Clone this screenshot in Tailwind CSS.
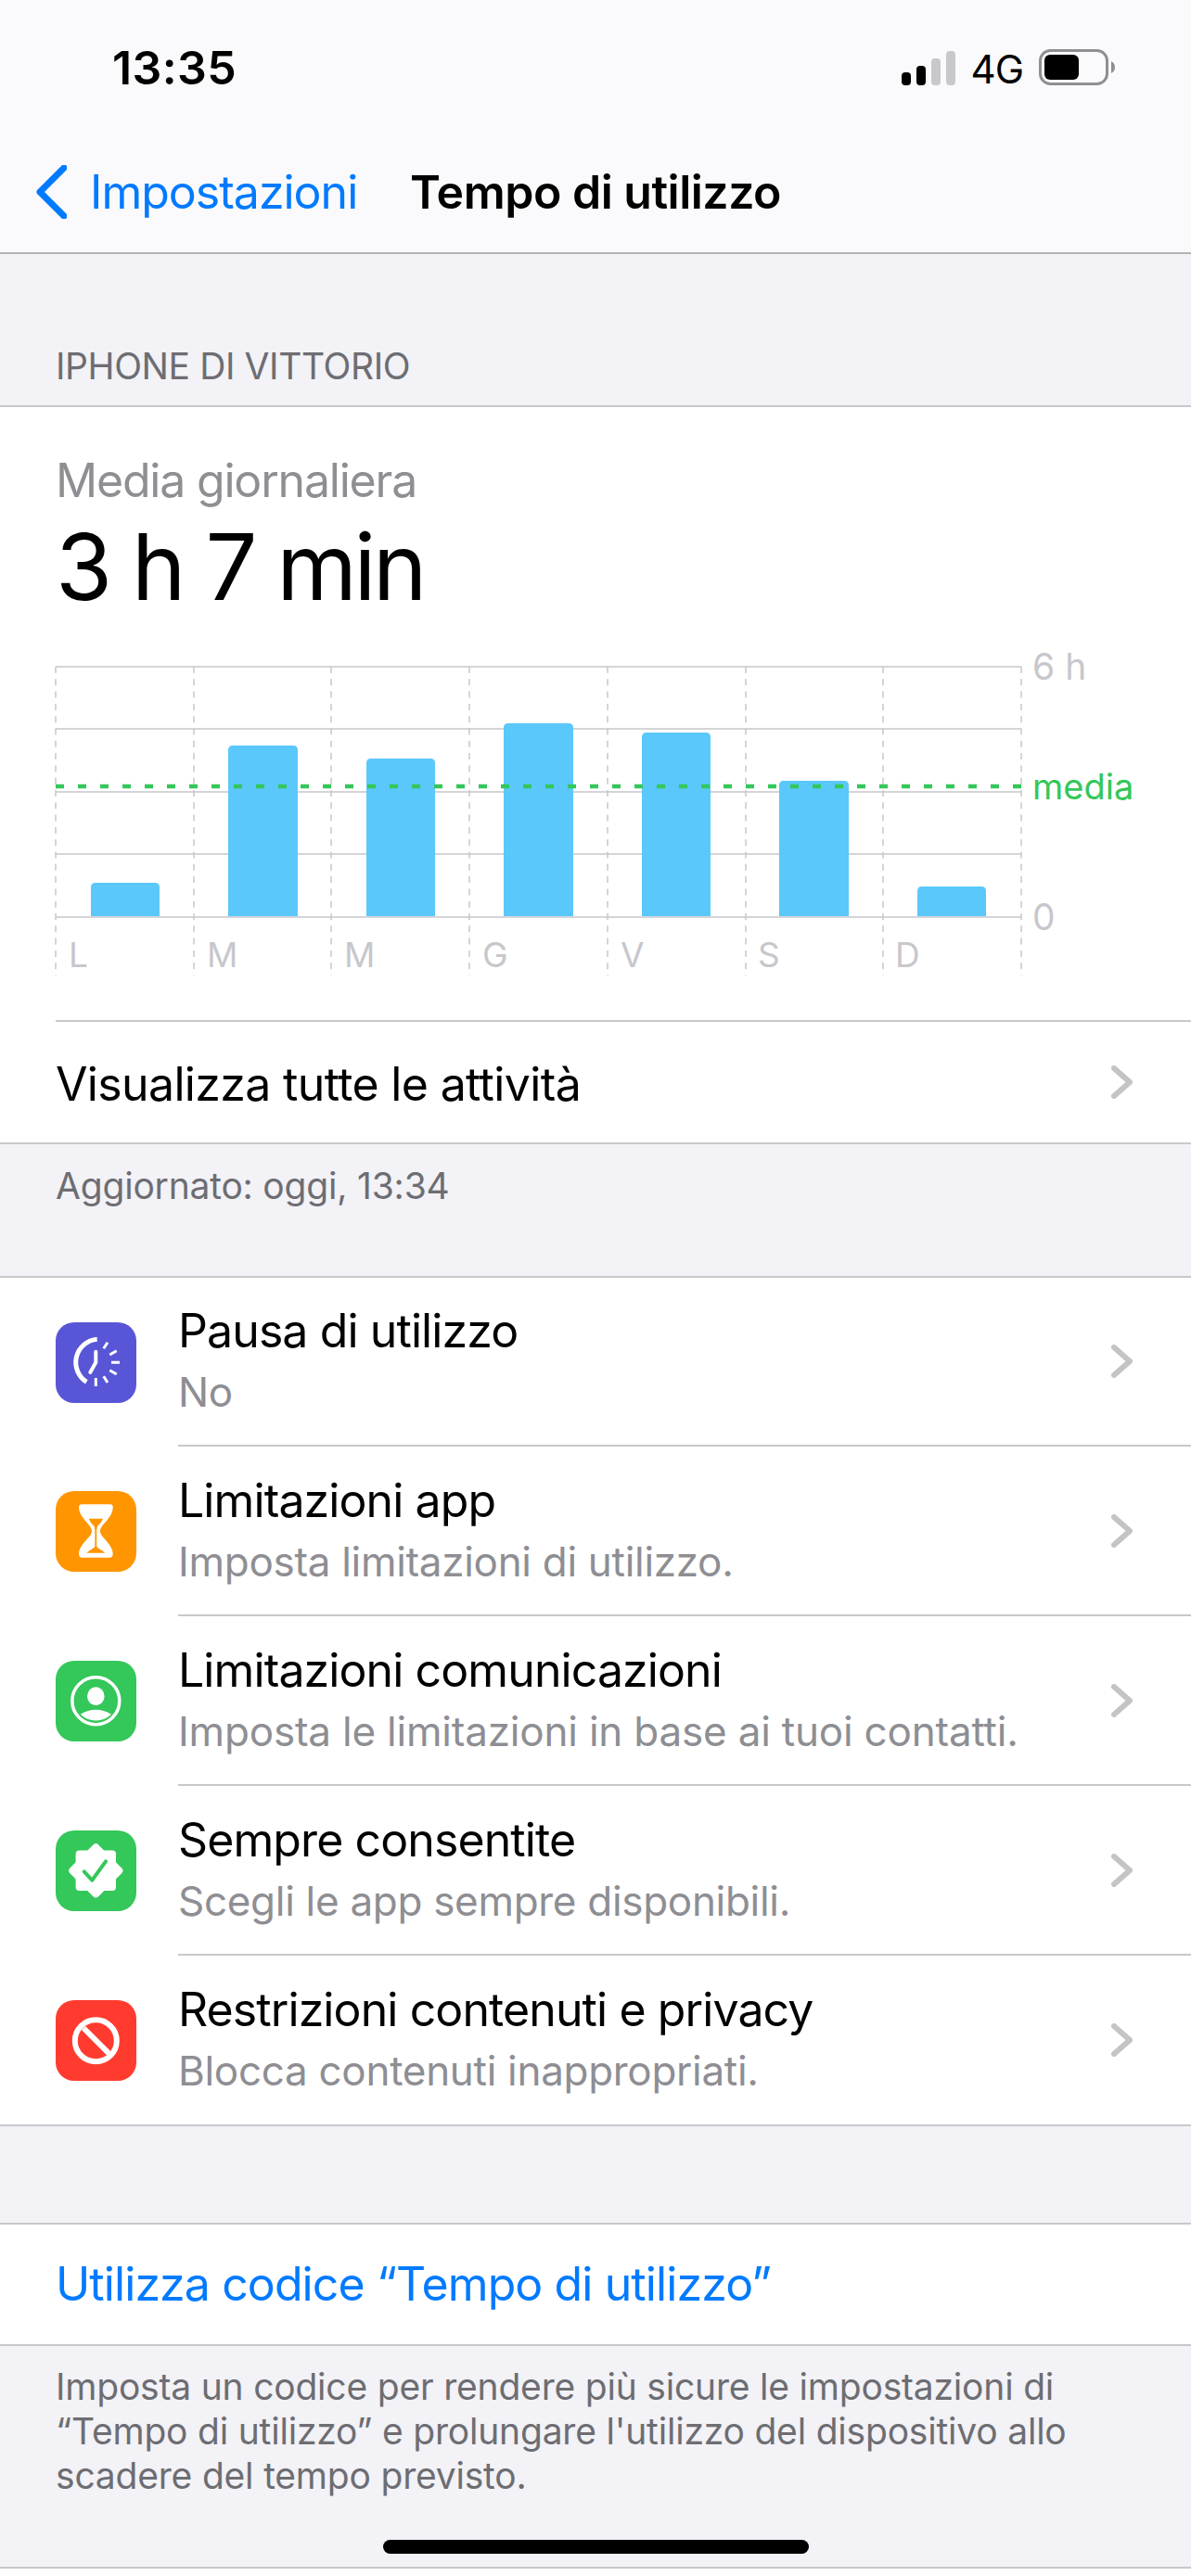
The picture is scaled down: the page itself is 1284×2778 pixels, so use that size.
<!DOCTYPE html>
<html lang="it">
<head>
    <meta charset="UTF-8">
    <meta name="viewport" content="width=device-width, initial-scale=1.0">
    <title>Tempo di utilizzo</title>
    <script src="https://cdn.jsdelivr.net/npm/@tailwindcss/browser@4"></script>
</head>
<body class="bg-[#f2f2f7] font-['Inter',sans-serif] text-black w-[1284px] h-[2778px] overflow-hidden">

    <!-- status bar + nav -->
    <header class="h-[274px] bg-[#fafafc] border-b-2 border-[#b2b2b2] flex flex-col">
        <div class="h-[144px] flex items-start justify-between pt-[44px] pl-[121px] pr-[80px]">
            <span class="text-[50px] leading-[58px] font-semibold tracking-[0.4px]">13:35</span>
            <div class="flex items-center gap-[17px] h-[58px]">
                <svg width="58" height="37" viewBox="0 0 58 37">
                    <rect x="0" y="23" width="10" height="14" rx="4" fill="#000"/>
                    <rect x="16" y="16" width="10" height="21" rx="4" fill="#000"/>
                    <rect x="32" y="8" width="10" height="29" rx="4" fill="#c7c7cc"/>
                    <rect x="48" y="0" width="10" height="37" rx="4" fill="#c7c7cc"/>
                </svg>
                <span class="text-[42px] leading-[58px] mt-[3px] tracking-[-1px]">4G</span>
                <svg width="84" height="40" viewBox="0 0 84 40">
                    <rect x="1.500" y="1.500" width="72" height="36" rx="11" fill="none" stroke="#8e8e93" stroke-width="3"/>
                    <rect x="6" y="6" width="37" height="27" rx="6" fill="#000"/>
                    <path d="M78 13 Q82 15 82 19.500 Q82 24 78 26Z" fill="#8e8e93"/>
                </svg>
            </div>
        </div>
        <nav class="flex items-center h-[128px] pl-[38px] pb-[2px]">
            <svg width="34" height="58" viewBox="0 0 34 58" class="mr-[25px]">
                <path d="M31 3 L5 29 L31 55" fill="none" stroke="#007aff" stroke-width="7" stroke-linecap="round" stroke-linejoin="round"/>
            </svg>
            <span class="text-[#007aff] text-[50px] w-[345px] whitespace-nowrap tracking-[-1px]">Impostazioni</span>
            <span class="text-[50px] font-semibold whitespace-nowrap tracking-[-0.5px]">Tempo di utilizzo</span>
        </nav>
    </header>

    <!-- section label -->
    <div class="h-[165px] flex items-end pl-[60px] pb-[17px] border-b-2 border-[#c8c8cc]">
        <span class="text-[39px] leading-[50px] text-[#6d6d72] tracking-[-0.4px]">IPHONE DI VITTORIO</span>
    </div>

    <!-- chart card -->
    <section class="bg-white border-b-2 border-[#c8c8cc]">
        <div class="pl-[60px] pt-[53px]">
            <p class="text-[50px] leading-[52px] text-[#8e8e93] tracking-[-1.2px]">Media giornaliera</p>
            <p class="text-[99px] leading-[116px] mt-[9px] tracking-[-3.500px]">3 h 7 min</p>
        </div>
        <svg width="1284" height="420" viewBox="0 0 1284 420" class="block mt-[11px]" font-family="Inter, sans-serif">
            <g stroke="#c7c7cc" stroke-width="1.500">
                <line x1="60" x2="1101" y1="39" y2="39"/>
                <line x1="60" x2="1101" y1="106" y2="106"/>
                <line x1="60" x2="1101" y1="174" y2="174"/>
                <line x1="60" x2="1101" y1="241" y2="241"/>
                <line x1="60" x2="1101" y1="309" y2="309"/>
            </g>
            <g stroke="#c7c7cc" stroke-width="1.500" stroke-dasharray="7 6.300">
                <line x1="60" x2="60" y1="39" y2="372"/>
                <line x1="209" x2="209" y1="39" y2="372"/>
                <line x1="357" x2="357" y1="39" y2="372"/>
                <line x1="506" x2="506" y1="39" y2="372"/>
                <line x1="655" x2="655" y1="39" y2="372"/>
                <line x1="804" x2="804" y1="39" y2="372"/>
                <line x1="952" x2="952" y1="39" y2="372"/>
                <line x1="1101" x2="1101" y1="39" y2="372"/>
            </g>
            <g fill="#5ac8fa">
                <path d="M98 308 V277 Q98 272 103 272 H167 Q172 272 172 277 V308Z"/>
                <path d="M246 308 V129 Q246 124 251 124 H316 Q321 124 321 129 V308Z"/>
                <path d="M395 308 V143 Q395 138 400 138 H464 Q469 138 469 143 V308Z"/>
                <path d="M543 308 V105 Q543 100 548 100 H613 Q618 100 618 105 V308Z"/>
                <path d="M692 308 V115 Q692 110 697 110 H761 Q766 110 766 115 V308Z"/>
                <path d="M840 308 V167 Q840 162 845 162 H910 Q915 162 915 167 V308Z"/>
                <path d="M989 308 V281 Q989 276 994 276 H1058 Q1063 276 1063 281 V308Z"/>
            </g>
            <line x1="60" x2="1101" y1="168" y2="168" stroke="#34c759" stroke-width="4.500" stroke-dasharray="9 15"/>
            <g fill="#c7c7cc" font-size="39">
                <text x="1113" y="53">6 h</text>
                <text x="1113" y="323">0</text>
            </g>
            <g fill="#c7c7cc" font-size="37">
                <text x="74" y="363">L</text>
                <text x="223" y="363">M</text>
                <text x="371" y="363">M</text>
                <text x="520" y="363">G</text>
                <text x="669" y="363">V</text>
                <text x="817" y="363">S</text>
                <text x="965" y="363">D</text>
            </g>
            <text x="1113" y="182" fill="#34c759" font-size="38">media</text>
        </svg>
        <div class="ml-[60px] h-[132px] border-t-2 border-[#c8c8cc] flex items-center justify-between pr-[62px]">
            <span class="text-[50px] pt-[4px] tracking-[-0.65px]">Visualizza tutte le attività</span>
            <svg width="24" height="36" viewBox="0 0 24 36"><path d="M3 3 L20 18 L3 33" fill="none" stroke="#c4c4c7" stroke-width="6" stroke-linecap="round" stroke-linejoin="round"/></svg>
        </div>
    </section>

    <p class="h-[144px] pl-[60px] pt-[20px] text-[39px] leading-[50px] text-[#6d6d72] tracking-[-0.2px] border-b-2 border-[#c8c8cc]">Aggiornato: oggi, 13:34</p>

    <!-- settings list -->
    <section class="bg-white border-b-2 border-[#c8c8cc]">
        <div class="flex items-center h-[182px] pl-[60px]">
            <svg width="87" height="87" viewBox="0 0 87 87" class="mr-[45px] shrink-0">
                <rect width="87" height="87" rx="20" fill="#5856d6"/>
                <g fill="none" stroke="#fff" stroke-linecap="round">
                    <path d="M44.700 18.300 A25 25 0 0 0 33.300 64.300" stroke-width="5" stroke-linecap="butt"/>
                    <path d="M43.300 31.700 V43.300 L37.300 54" stroke-width="4"/>
                    <path d="M51.700 28.300 L56 21.700 M58.300 35 L65.700 30.700 M60 43.300 H69 M58.300 51.700 L65.700 56 M51.700 58.300 L56 65 M43.300 60 V69" stroke-width="3" stroke-linecap="butt"/>
                </g>
            </svg>
            <div class="flex-1 h-full flex items-center justify-between pr-[62px] border-b-2 border-[#c8c8cc]">
                <div class="pb-[4px]"><p class="text-[50px] leading-[60px] tracking-[-0.9px]">Pausa di utilizzo</p><p class="text-[44px] leading-[52px] mt-[10px] text-[#8e8e93] tracking-[-0.3px]">No</p></div>
                <svg width="24" height="36" viewBox="0 0 24 36"><path d="M3 3 L20 18 L3 33" fill="none" stroke="#c4c4c7" stroke-width="6" stroke-linecap="round" stroke-linejoin="round"/></svg>
            </div>
        </div>
        <div class="flex items-center h-[183px] pl-[60px]">
            <svg width="87" height="87" viewBox="0 0 87 87" class="mr-[45px] shrink-0">
                <rect width="87" height="87" rx="20" fill="#ff9500"/>
                <path d="M28 14.300 H59 Q62 14.300 61.700 18 C61 30 48 36 48 43.300 C48 50 61.700 57 61.700 68 Q61.700 71.700 58 71.700 H29 Q25 71.700 25 68 C25 57 39 50 39 43.300 C39 36 26 30 25 18 Q25 14.300 28 14.300Z" fill="#fff"/>
                <path d="M35.700 29.700 H51 Q49 35 45 38 L44.200 42 V60 C47 62.500 50 64 53.300 66.700 H33.300 C36.600 64 39.600 62.500 42.400 60 V42 L41.600 38 Q37.700 35 35.700 29.700Z" fill="#ff9500"/>
            </svg>
            <div class="flex-1 h-full flex items-center justify-between pr-[62px] border-b-2 border-[#c8c8cc]">
                <div class="pb-[4px]"><p class="text-[50px] leading-[60px] tracking-[-0.9px]">Limitazioni app</p><p class="text-[44px] leading-[52px] mt-[10px] text-[#8e8e93] tracking-[-0.3px]">Imposta limitazioni di utilizzo.</p></div>
                <svg width="24" height="36" viewBox="0 0 24 36"><path d="M3 3 L20 18 L3 33" fill="none" stroke="#c4c4c7" stroke-width="6" stroke-linecap="round" stroke-linejoin="round"/></svg>
            </div>
        </div>
        <div class="flex items-center h-[183px] pl-[60px]">
            <svg width="87" height="87" viewBox="0 0 87 87" class="mr-[45px] shrink-0">
                <rect width="87" height="87" rx="20" fill="#34c759"/>
                <circle cx="43.300" cy="43.300" r="25.500" fill="none" stroke="#fff" stroke-width="3.500"/>
                <ellipse cx="43.300" cy="38.300" rx="9.300" ry="10" fill="#fff"/>
                <path d="M26.700 57.700 Q43.300 47.700 60 57.700 A24 24 0 0 1 26.700 57.700Z" fill="#fff"/>
            </svg>
            <div class="flex-1 h-full flex items-center justify-between pr-[62px] border-b-2 border-[#c8c8cc]">
                <div class="pb-[4px]"><p class="text-[50px] leading-[60px] tracking-[-0.9px]">Limitazioni comunicazioni</p><p class="text-[44px] leading-[52px] mt-[10px] text-[#8e8e93] tracking-[-0.2px]">Imposta le limitazioni in base ai tuoi contatti.</p></div>
                <svg width="24" height="36" viewBox="0 0 24 36"><path d="M3 3 L20 18 L3 33" fill="none" stroke="#c4c4c7" stroke-width="6" stroke-linecap="round" stroke-linejoin="round"/></svg>
            </div>
        </div>
        <div class="flex items-center h-[183px] pl-[60px]">
            <svg width="87" height="87" viewBox="0 0 87 87" class="mr-[45px] shrink-0">
                <rect width="87" height="87" rx="20" fill="#34c759"/>
                <rect x="21.600" y="21.600" width="43.400" height="43.400" rx="4" fill="#fff"/>
                <rect x="21.600" y="21.600" width="43.400" height="43.400" rx="4" fill="#fff" transform="rotate(45 43.300 43.300)"/>
                <path d="M30.700 44.300 L39.300 53.700 L54 33.300" fill="none" stroke="#34c759" stroke-width="4" stroke-linecap="round" stroke-linejoin="round"/>
            </svg>
            <div class="flex-1 h-full flex items-center justify-between pr-[62px] border-b-2 border-[#c8c8cc]">
                <div class="pb-[4px]"><p class="text-[50px] leading-[60px] tracking-[-0.9px]">Sempre consentite</p><p class="text-[44px] leading-[52px] mt-[10px] text-[#8e8e93] tracking-[-0.3px]">Scegli le app sempre disponibili.</p></div>
                <svg width="24" height="36" viewBox="0 0 24 36"><path d="M3 3 L20 18 L3 33" fill="none" stroke="#c4c4c7" stroke-width="6" stroke-linecap="round" stroke-linejoin="round"/></svg>
            </div>
        </div>
        <div class="flex items-center h-[182px] pl-[60px]">
            <svg width="87" height="87" viewBox="0 0 87 87" class="mr-[45px] shrink-0">
                <rect width="87" height="87" rx="20" fill="#ff3b30"/>
                <circle cx="43.300" cy="43.700" r="22.500" fill="none" stroke="#fff" stroke-width="6"/>
                <path d="M30 30 L57.300 57.300" stroke="#fff" stroke-width="6"/>
            </svg>
            <div class="flex-1 h-full flex items-center justify-between pr-[62px]">
                <div class="pb-[4px]"><p class="text-[50px] leading-[60px] tracking-[-0.9px]">Restrizioni contenuti e privacy</p><p class="text-[44px] leading-[52px] mt-[10px] text-[#8e8e93] tracking-[-0.3px]">Blocca contenuti inappropriati.</p></div>
                <svg width="24" height="36" viewBox="0 0 24 36"><path d="M3 3 L20 18 L3 33" fill="none" stroke="#c4c4c7" stroke-width="6" stroke-linecap="round" stroke-linejoin="round"/></svg>
            </div>
        </div>
    </section>

    <div class="h-[106px] border-b-2 border-[#c8c8cc]"></div>

    <div class="h-[131px] bg-white border-b-2 border-[#c8c8cc] flex items-center pl-[60px]">
        <span class="text-[50px] text-[#007aff] tracking-[-0.9px]">Utilizza codice “Tempo di utilizzo”</span>
    </div>

    <footer class="relative h-[240px] border-b-2 border-[#c8c8cc] pl-[60px] pt-[20px]">
        <p class="text-[39px] leading-[48px] text-[#6d6d72] tracking-[-0.2px] w-[1200px]">Imposta un codice per rendere più sicure le impostazioni di<br>“Tempo di utilizzo” e prolungare l'utilizzo del dispositivo allo<br>scadere del tempo previsto.</p>
        <div class="absolute left-[413px] top-[209px] w-[459px] h-[15px] rounded-full bg-black"></div>
    </footer>
    <div class="h-[8px] bg-white"></div>

</body>
</html>
